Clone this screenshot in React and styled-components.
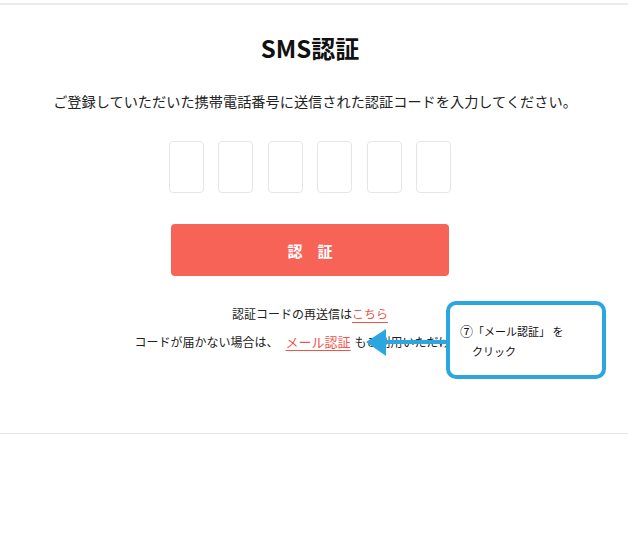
import React from 'react'
import styled, { createGlobalStyle } from 'styled-components'

const GlobalStyle = createGlobalStyle`
  html, body {
    margin: 0;
    padding: 0;
    background: #fff;
  }
  body {
    font-family: 'Noto Sans CJK JP', 'Noto Sans', sans-serif;
    color: #222;
  }
`

const Page = styled.div`
  position: relative;
  width: 628px;
  padding-top: 3px;
`

const Section = styled.section`
  border-top: 2px solid #ebebeb;
  border-bottom: 1px solid #e6e6e6;
  padding: 27px 8px 81px 0;
  display: flex;
  flex-direction: column;
  align-items: center;
`

const Title = styled.h1`
  margin: 0;
  font-size: 24px;
  line-height: 32px;
  font-weight: 700;
  color: #111;
`

const Lead = styled.p`
  margin: 27px 0 0;
  padding-left: 10px;
  font-size: 14.2px;
  line-height: 20px;
  color: #222;
  white-space: nowrap;
`

const CodeRow = styled.div`
  margin-top: 30px;
  display: flex;
  gap: 14.4px;
`

const CodeBox = styled.input`
  width: 35px;
  height: 52px;
  box-sizing: border-box;
  border: 1px solid #e6e6e6;
  border-radius: 4px;
  background: #fff;
  padding: 0;
  text-align: center;
  font-size: 20px;
  outline: none;
`

const SubmitButton = styled.button`
  margin-top: 31px;
  width: 278px;
  height: 52px;
  border: 0;
  border-radius: 4px;
  background: #f76357;
  color: #fff;
  font-family: inherit;
  font-size: 15px;
  font-weight: 700;
  cursor: pointer;
`

const Note = styled.p`
  margin: ${(p) => p.$gap}px 0 0;
  font-size: 12px;
  line-height: 20px;
  color: #222;
  white-space: nowrap;
`

const TextLink = styled.a`
  color: #f0544a;
  font-size: ${(p) => p.$size || 12}px;
  text-decoration: underline;
  text-underline-offset: 3px;
  text-decoration-thickness: 1px;
  margin: ${(p) => p.$margin || '0'};
  cursor: pointer;
`

const Callout = styled.div`
  position: absolute;
  left: 446px;
  top: 301px;
  width: 160px;
  height: 78px;
  box-sizing: border-box;
  border: 4px solid #2ba6df;
  border-radius: 10px;
  background: #fff;
  padding: 16px 0 0 10px;
  font-size: 11px;
  line-height: 20px;
  color: #111;
`

const CalloutLine = styled.div`
  padding-left: ${(p) => p.$indent || 0}px;
  white-space: nowrap;
`

const StepNum = styled.span`
  font-size: 13px;
  line-height: 1;
`

const Arrow = styled.svg`
  position: absolute;
  left: 362px;
  top: 326px;
  width: 88px;
  height: 32px;
`

export default function App() {
  return (
    <>
      <GlobalStyle />
      <Page>
        <Section>
          <Title>SMS認証</Title>
          <Lead>ご登録していただいた携帯電話番号に送信された認証コードを入力してください。</Lead>
          <CodeRow>
            {[0, 1, 2, 3, 4, 5].map((i) => (
              <CodeBox key={i} maxLength={1} inputMode="numeric" />
            ))}
          </CodeRow>
          <SubmitButton>認　証</SubmitButton>
          <Note $gap={28}>
            認証コードの再送信は<TextLink>こちら</TextLink>
          </Note>
          <Note $gap={8}>
            コードが届かない場合は、
            <TextLink $size={13} $margin="0 4px 0 7px">メール認証</TextLink>
            もご利用いただけます。
          </Note>
        </Section>

        <Arrow viewBox="0 0 88 32">
          <path d="M4 16 L24 3 L24 30 Z" fill="#2ba6df" />
          <rect x="23" y="14" width="62" height="4" fill="#2ba6df" />
        </Arrow>
        <Callout>
          <CalloutLine><StepNum>⑦</StepNum>「メール認証」 を</CalloutLine>
          <CalloutLine $indent={12}>クリック</CalloutLine>
        </Callout>
      </Page>
    </>
  )
}
